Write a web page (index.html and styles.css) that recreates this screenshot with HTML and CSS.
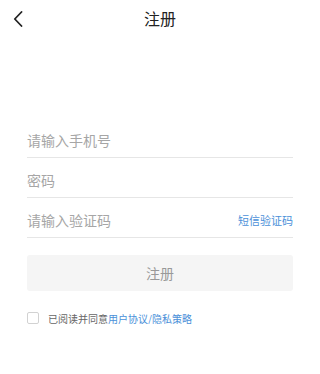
FILE: index.html
```html
<!DOCTYPE html>
<html lang="zh-CN">
<head>
<meta charset="utf-8">
<title>注册</title>
<link rel="stylesheet" href="styles.css">
</head>
<body>
<div class="page">
  <header class="header">
    <span class="back">
      <svg width="10" height="16" viewBox="0 0 10 16"><path d="M8.5 1 L1.8 8 L8.5 15" fill="none" stroke="#222" stroke-width="1.8" stroke-linecap="round" stroke-linejoin="round"/></svg>
    </span>
    <h1 class="title">注册</h1>
  </header>
  <form class="form">
    <div class="row"><span class="placeholder">请输入手机号</span></div>
    <div class="row"><span class="placeholder">密码</span></div>
    <div class="row"><span class="placeholder">请输入验证码</span><span class="code">短信验证码</span></div>
    <div class="submit">注册</div>
    <div class="agree">
      <span class="checkbox"></span>
      <span class="agree-text">已阅读并同意<span class="link">用户协议/隐私策略</span></span>
    </div>
  </form>
</div>
</body>
</html>
```
FILE: styles.css
```css
* { box-sizing: border-box; margin: 0; padding: 0; }
html, body { background: #fff; }
body {
  font-family: "Noto Sans CJK SC", "Noto Sans", "Liberation Sans", sans-serif;
  color: #333;
}
.page { width: 320px; }
.header {
  position: relative;
  height: 37px;
  display: flex;
  align-items: center;
  justify-content: center;
}
.back {
  position: absolute;
  left: 13px;
  top: 11px;
  display: flex;
}
.title {
  font-size: 16px;
  font-weight: 400;
  color: #222;
  line-height: 37px;
}
.form {
  margin: 81px 27px 0;
  display: flex;
  flex-direction: column;
}
.row {
  height: 40px;
  padding-top: 4px;
  border-bottom: 1px solid #e6e6e6;
  display: flex;
  align-items: center;
  justify-content: space-between;
}
.placeholder {
  font-size: 14px;
  color: #a6a6a6;
}
.code {
  font-size: 11px;
  color: #4a90d9;
}
.submit {
  margin-top: 17px;
  height: 36px;
  border-radius: 3px;
  background: #f5f5f5;
  color: #999;
  font-size: 14px;
  display: flex;
  align-items: center;
  justify-content: center;
}
.agree {
  margin-top: 21px;
  height: 12px;
  display: flex;
  align-items: center;
  gap: 9px;
}
.checkbox {
  width: 12px;
  height: 12px;
  border: 1px solid #d2d2d2;
  border-radius: 2px;
}
.agree-text {
  font-size: 10px;
  color: #666;
}
.link { color: #4a90d9; }
```
